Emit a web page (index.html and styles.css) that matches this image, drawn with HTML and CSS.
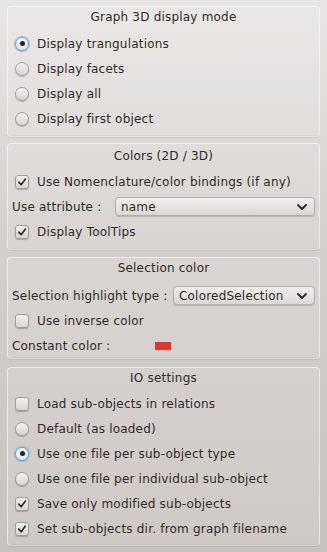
FILE: index.html
```html
<!DOCTYPE html>
<html>
<head>
<meta charset="utf-8">
<link rel="stylesheet" href="styles.css">
</head>
<body>
<div class="page">
  <section class="group g1">
    <div class="title">Graph 3D display mode</div>
    <div class="row"><span class="radio on"><span class="dot"></span></span><span>Display trangulations</span></div>
    <div class="row"><span class="radio"></span><span>Display facets</span></div>
    <div class="row"><span class="radio"></span><span>Display all</span></div>
    <div class="row"><span class="radio"></span><span>Display first object</span></div>
  </section>

  <section class="group g2">
    <div class="title">Colors (2D / 3D)</div>
    <div class="row"><span class="check"><svg viewBox="0 0 14 14" width="14" height="14"><path d="M3.2 7.2 L6 10.2 L11 3.6" fill="none" stroke="#2c2825" stroke-width="1.9" stroke-linecap="round" stroke-linejoin="round"/></svg></span><span>Use Nomenclature/color bindings (if any)</span></div>
    <div class="row field"><span class="label">Use attribute :</span><div class="combo c1"><span>name</span><svg class="chev" viewBox="0 0 10 6" width="10" height="6"><path d="M1 1 L5 5 L9 1" fill="none" stroke="#2c2825" stroke-width="1.8" stroke-linecap="round" stroke-linejoin="round"/></svg></div></div>
    <div class="row"><span class="check"><svg viewBox="0 0 14 14" width="14" height="14"><path d="M3.2 7.2 L6 10.2 L11 3.6" fill="none" stroke="#2c2825" stroke-width="1.9" stroke-linecap="round" stroke-linejoin="round"/></svg></span><span>Display ToolTips</span></div>
  </section>

  <section class="group g3">
    <div class="title">Selection color</div>
    <div class="row field"><span class="label">Selection highlight type :</span><div class="combo c2"><span>ColoredSelection</span><svg class="chev" viewBox="0 0 10 6" width="10" height="6"><path d="M1 1 L5 5 L9 1" fill="none" stroke="#2c2825" stroke-width="1.8" stroke-linecap="round" stroke-linejoin="round"/></svg></div></div>
    <div class="row"><span class="check"></span><span>Use inverse color</span></div>
    <div class="row field"><span class="label const">Constant color :</span><span class="swatch"></span></div>
  </section>

  <section class="group g4">
    <div class="title">IO settings</div>
    <div class="row"><span class="check"></span><span>Load sub-objects in relations</span></div>
    <div class="row"><span class="radio"></span><span>Default (as loaded)</span></div>
    <div class="row"><span class="radio on"><span class="dot"></span></span><span>Use one file per sub-object type</span></div>
    <div class="row"><span class="radio"></span><span>Use one file per individual sub-object</span></div>
    <div class="row"><span class="check"><svg viewBox="0 0 14 14" width="14" height="14"><path d="M3.2 7.2 L6 10.2 L11 3.6" fill="none" stroke="#2c2825" stroke-width="1.9" stroke-linecap="round" stroke-linejoin="round"/></svg></span><span>Save only modified sub-objects</span></div>
    <div class="row"><span class="check"><svg viewBox="0 0 14 14" width="14" height="14"><path d="M3.2 7.2 L6 10.2 L11 3.6" fill="none" stroke="#2c2825" stroke-width="1.9" stroke-linecap="round" stroke-linejoin="round"/></svg></span><span>Set sub-objects dir. from graph filename</span></div>
  </section>
</div>
</body>
</html>
```

FILE: styles.css
```css
html, body {
  margin: 0;
  padding: 0;
}
body {
  width: 327px;
  height: 552px;
  overflow: hidden;
  background: linear-gradient(to bottom, #e8e6e4 0%, #d6d1ce 40%, #c8c2be 100%);
  font-family: "DejaVu Sans", sans-serif;
  font-size: 12px;
  letter-spacing: 0.2px;
  color: #2f2b28;
}
.page {
  display: flex;
  flex-direction: column;
  padding: 6px 7px 0 7px;
}
.group {
  border: 1px solid rgba(255,255,255,0.55);
  border-bottom-color: rgba(255,255,255,0.15);
  border-radius: 4px;
  background: rgba(255,255,255,0.12);
  box-shadow: 0 1px 0 rgba(0,0,0,0.06), inset 0 -1px 0 rgba(0,0,0,0.03);
  display: flex;
  flex-direction: column;
  padding: 0 0 5px 0;
}
.g2 { margin-top: 6px; padding-top: 2px; }
.g3 { margin-top: 7px; padding-bottom: 0; }
.g4 { margin-top: 8px; padding-top: 0; padding-bottom: 4px; }
.title {
  height: 20px;
  line-height: 20px;
  text-align: center;
  margin-bottom: 4px;
}
.g2 .title { margin-bottom: 3px; }
.g3 .title { height: 20px; line-height: 20px; margin-bottom: 5px; }
.g4 .title { margin-bottom: 3px; }
.row {
  height: 25px;
  display: flex;
  align-items: center;
  padding-left: 7px;
  gap: 8px;
  white-space: nowrap;
}
.row.field {
  padding-left: 4px;
  padding-right: 4px;
  gap: 0;
}
.label { flex: none; }
.radio, .check {
  flex: none;
  width: 14px;
  height: 14px;
  box-sizing: border-box;
  background: linear-gradient(to bottom, #f4f2f1, #d8d4d1);
  border: 1px solid #a29c97;
  box-shadow: 0 1px 1px rgba(0,0,0,0.22);
  display: flex;
  align-items: center;
  justify-content: center;
}
.radio { border-radius: 50%; }
.check { border-radius: 3px; }
.check svg { display: block; }
.radio.on {
  border-color: #5ea4d8;
  box-shadow: 0 0 0 1px rgba(110,175,225,0.6), 0 1px 1px rgba(0,0,0,0.1);
  background: linear-gradient(to bottom, #fbfbfb, #e6e4e2);
}
.dot {
  width: 5px;
  height: 5px;
  border-radius: 50%;
  background: #26221f;
}
.combo {
  box-sizing: border-box;
  height: 19px;
  border-radius: 4px;
  background: linear-gradient(to bottom, #f1efee, #dbd7d4);
  border: 1px solid #b4aea9;
  box-shadow: 0 1px 1px rgba(0,0,0,0.15);
  display: flex;
  align-items: center;
  justify-content: space-between;
  padding: 0 7px 0 5px;
}
.c1 { width: 200px; margin-left: auto; }
.c2 { width: 142px; margin-left: auto; }
.chev { display: block; }
.swatch {
  width: 16px;
  height: 8px;
  background: #e8322a;
  margin-left: 45px;
}
```
